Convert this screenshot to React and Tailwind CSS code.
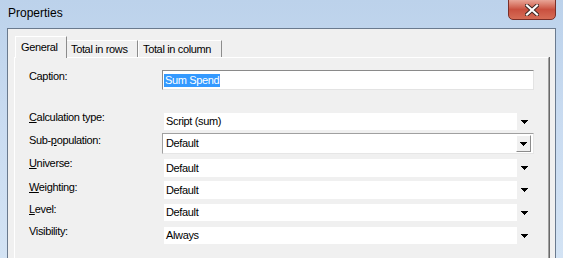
import React from "react";

const font = "font-['Liberation_Sans',Arial,sans-serif]";

function Arrow() {
  return (
    <svg width="7" height="4" viewBox="0 0 7 4" className="block">
      <path d="M0 0h7v1H6v1H5v1H4v1H3V3H2V2H1V1H0z" fill="#000" />
    </svg>
  );
}

function Label({ text, u, top }) {
  // u = index of the underlined access key
  return (
    <div className={`absolute left-[14px] leading-[13px] ${top}`}>
      {u === undefined ? (
        text
      ) : (
        <>
          {text.slice(0, u)}
          <span className="underline underline-offset-[1px]">{text[u]}</span>
          {text.slice(u + 1)}
        </>
      )}
    </div>
  );
}

function Combo({ value, className }) {
  return (
    <div className={`ml-[149px] flex w-[367px] bg-white ${className}`}>
      <div className="flex-1 flex items-center pl-[2px] leading-[13px]">{value}</div>
      <div className="w-[14px] bg-[#f0f0f0] flex items-center justify-center">
        <Arrow />
      </div>
    </div>
  );
}

export default function App() {
  return (
    <div
      className={`relative w-[563px] h-[258px] overflow-hidden bg-gradient-to-b from-[#bcd2eb] via-[#cadcf1] to-[#d3e3f4] text-[11px] text-black tracking-[-0.35px] ${font}`}
    >
      {/* Title bar */}
      <div className="h-[28px] pl-[8px] pt-[6px] text-[12px] tracking-normal leading-[15px] text-black">
        Properties
      </div>

      {/* Close button */}
      <div className="absolute left-[508px] top-[-1px] w-[48px] h-[21px] rounded-b-[5px] border border-[#7a2f28] bg-gradient-to-b from-[#e8a597] via-[#c9503f] to-[#d66c56] flex items-center justify-center">
        <svg width="14" height="12" viewBox="0 0 14 12">
          <path d="M2 1.5l10 9M12 1.5l-10 9" stroke="#3b2420" strokeWidth="4" strokeLinecap="square" />
          <path d="M2 1.5l10 9M12 1.5l-10 9" stroke="#fff" strokeWidth="2.2" strokeLinecap="square" />
        </svg>
      </div>

      {/* Frame + client area */}
      <div className="flex h-[230px] px-[7px]">
        <div className="flex-1 border-l border-t border-r border-[#6a7a8e] bg-[#f0f0f0] px-[6px] pt-[7px]">
          {/* Tabs */}
          <div className="relative z-10 flex items-end h-[21px] pl-[1px]">
            <div className="w-[52px] h-[22px] -mb-px bg-[#f0f0f0] border-l border-t border-white border-r border-r-[#8c8c8c] flex items-start pt-[4px] pl-[5px] leading-[13px]">
              General
            </div>
            <div className="w-[71px] h-[17px] border-t border-r border-white border-r-[#8c8c8c] flex items-center pl-[4px] leading-[13px]">
              Total in rows
            </div>
            <div className="w-[84px] h-[17px] border-t border-l border-r border-white border-r-[#8c8c8c] flex items-center pl-[4px] leading-[13px]">
              Total in column
            </div>
          </div>

          {/* Panel */}
          <div className="relative h-[260px] border-l border-t border-white border-r border-r-[#a0a0a0] shadow-[1px_0_0_#696969]">
            <Label text="Caption:" top="top-[12px]" />
            <Label text="Calculation type:" u={0} top="top-[53px]" />
            <Label text="Sub-population:" u={4} top="top-[76px]" />
            <Label text="Universe:" u={0} top="top-[99px]" />
            <Label text="Weighting:" u={0} top="top-[123px]" />
            <Label text="Level:" u={0} top="top-[145px]" />
            <Label text="Visibility:" top="top-[167px]" />

            {/* Caption input */}
            <div className="ml-[147px] mt-[12px] w-[372px] h-[20px] border border-t-[#8a8a8a] border-l-[#8a8a8a] border-b-[#e3e3e3] border-r-[#e3e3e3] bg-white flex items-center pl-[1px]">
              <span className="bg-[#3399ff] text-white leading-[13px] px-[1px]">Sum Spend</span>
            </div>

            <Combo value="Script (sum)" className="mt-[23px] h-[17px]" />

            {/* Focused combo */}
            <div className="ml-[147px] mt-[3px] w-[372px] h-[21px] border border-t-[#a0a0a0] border-l-[#a0a0a0] border-b-[#e6e6e6] border-r-[#e6e6e6] bg-white flex items-center pl-[3px] pr-[2px]">
              <div className="flex-1 leading-[13px]">Default</div>
              <div className="w-[15px] h-[17px] bg-[#f0f0f0] border border-t-white border-l-white border-b-[#8c8c8c] border-r-[#8c8c8c] flex items-center justify-center">
                <Arrow />
              </div>
            </div>

            <Combo value="Default" className="mt-[5px] h-[18px]" />
            <Combo value="Default" className="mt-[4px] h-[18px]" />
            <Combo value="Default" className="mt-[5px] h-[17px]" />
            <Combo value="Always" className="mt-[6px] h-[17px]" />
          </div>
        </div>
      </div>
    </div>
  );
}
